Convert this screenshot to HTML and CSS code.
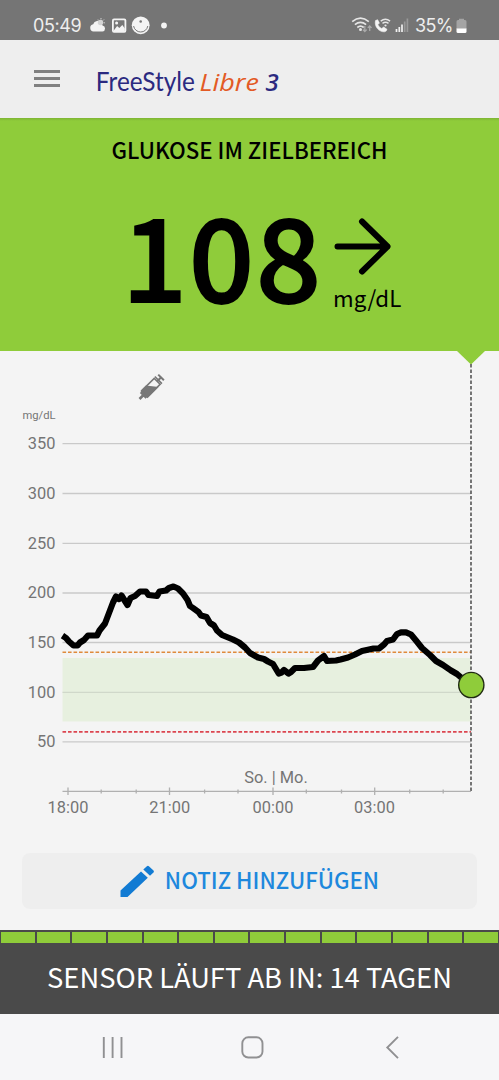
FILE: index.html
```
<!DOCTYPE html>
<html lang="de">
<head>
  <meta charset="UTF-8">
  <meta name="viewport" content="width=device-width, initial-scale=1.0">
  <title>FreeStyle Libre 3</title>
  <link rel="stylesheet" href="styles.css">
</head>
<body>
  <div class="status-bar">
    <span class="clock">05:49</span>
    <svg class="status-left" width="82" height="20" viewBox="88 17 82 20">
      <g fill="#f4f4f4">
        <path d="M93.500 32.500a3.700 3.700 0 0 1-.3-7.300 4.600 4.600 0 0 1 8.300-1.200l1 2.400a3.100 3.100 0 0 1 0 6.100z"/>
        <circle cx="100.500" cy="23.500" r="2.700" fill="#d4d4d4"/>
        <path d="M98 20.500l.8 1M101 19v1.300M104 20.500l-1 1M104.900 23.800h-1.300" stroke="#d4d4d4" stroke-width="1"/>
        <rect x="112" y="19.500" width="14.300" height="14.300" rx="2"/>
        <circle cx="140.700" cy="26.300" r="8.900"/>
        <circle cx="164" cy="26.500" r="2.900"/>
      </g>
      <rect x="113.800" y="21.300" width="10.700" height="10.700" rx=".5" fill="#777"/>
      <path d="M113.800 31.500l3.300-4.500 2.200 2 3-3 2.500 3.500v2.500h-11z" fill="#f4f4f4"/>
      <circle cx="116.600" cy="24" r="1.500" fill="#f4f4f4"/>
      <path d="M133.600 27a7.200 7.200 0 0 0 14.200 0" fill="none" stroke="#777" stroke-width="1"/>
      <circle cx="140.700" cy="22.500" r="1.300" fill="#777"/>
    </svg>
    <svg class="status-right" width="60" height="20" viewBox="350 17 60 20">
      <g fill="none" stroke="#e6e6e6" stroke-width="1.700">
        <path d="M352.200 22.600q8.300-6.800 16.600 0M354.900 25.700q5.600-4.500 11.200 0M357.300 28.500q3.200-2.600 6.400 0"/>
        <path d="M380.700 22.100q4.700-3.700 9.400 0M382.500 24.400q3-2.300 6 0" stroke-width="1.400"/>
      </g>
      <circle cx="360.500" cy="30.500" r="1.500" fill="#e6e6e6"/>
      <path d="M364.800 27v5.500m-1.900-1.900l1.900 1.900 1.900-1.900M369.700 32v-5m-1.900 1.900l1.900-1.900 1.900 1.900" fill="none" stroke="#aaa" stroke-width="1.300"/>
      <path d="M375.500 21.600l2.100-.9 1.800 3.400-1.600 1.700q1.300 2.800 3.900 3.700l2-1.400 3.300 2.200q-.4 2.300-2.600 2.500c-5.500.2-10.300-5.200-8.900-11.200z" fill="#f4f4f4" stroke="#f4f4f4" stroke-width=".6"/>
      <circle cx="385.500" cy="26.500" r="1.100" fill="#e6e6e6"/>
      <path d="M396.500 33v-3M399.300 33v-5M402 33v-7.500" stroke="#f0f0f0" stroke-width="1.700"/>
      <path d="M404.700 33V22.500M407.400 33V19.500" stroke="#999" stroke-width="1.700"/>
    </svg>
    <span class="battery-text">35%</span>
    <svg class="battery" width="11" height="16" viewBox="0 0 11 16">
      <path d="M3 2V.8h5V2h1q1.500 0 1.500 1.500V11H.5V3.500Q.5 2 2 2z" fill="#a4a4a4"/>
      <path d="M.5 10.500h10v3q0 1.500-1.500 1.500H2Q.5 15 .5 13.500z" fill="#fff"/>
    </svg>
  </div>

  <header class="app-bar">
    <div class="menu-icon"><span></span><span></span><span></span></div>
    <svg class="logo" width="190" height="40" viewBox="95 62 190 40">
      <text class="logo-free" x="95.800" y="91" textLength="99" lengthAdjust="spacingAndGlyphs">FreeStyle</text>
      <text class="logo-libre" x="199.500" y="91.200" textLength="59.500" lengthAdjust="spacingAndGlyphs">Libre</text>
      <text class="logo-three" x="265.500" y="91.200">3</text>
    </svg>
  </header>

  <section class="glucose">
    <h1>GLUKOSE IM ZIELBEREICH</h1>
    <div class="reading">
      <div class="value">108</div>
      <div class="trend">
        <svg width="58" height="58" viewBox="0 0 58 58">
          <path d="M4.500 29.500h50M29 4.500l25.500 25-25.500 25" fill="none" stroke="#000" stroke-width="6" stroke-linecap="round" stroke-linejoin="round"/>
        </svg>
        <div class="unit">mg/dL</div>
      </div>
    </div>
  </section>

  <svg class="chart" width="499" height="480" viewBox="0 351 499 480">
    <path d="M457 351h28l-14 13.500z" fill="#8fcc3a"/>

    <!-- insulin marker -->
    <g transform="translate(139.500 399) rotate(-45)" fill="#777">
      <path d="M0-1.300h5v2.600H0zM4.500-4H7v-1h7l8 10H7V4H4.500z"/>
      <path d="M7-4.200h18v8.400H7z" fill="none" stroke="#777" stroke-width="1.600"/>
      <path d="M25-1h5v2h-5zM26-5h1.500V5H26zM29.500-4h2v8h-2z"/>
    </g>

    <rect x="62.500" y="658" width="408.500" height="63.500" fill="#e7f0df"/>
    <path class="grid" d="M62.500 443.700H471M62.500 493.500H471M62.500 543.300H471M62.500 593H471M62.500 642.500H471M62.500 741.800H471"/>
    <path class="grid grid-in" d="M62.500 692.300H471"/>
    <path d="M62.500 652.300H471" stroke="#df8a3c" stroke-width="1.600" stroke-dasharray="3.600 1.900"/>
    <path d="M62.500 731.900H471" stroke="#dc4650" stroke-width="1.700" stroke-dasharray="3.600 1.900"/>
    <path d="M471 364V792" stroke="#555" stroke-width="1.600" stroke-dasharray="3.600 1.900"/>

    <path class="axis" d="M62.500 791.400H471"/>
    <path class="axis" d="M68 787.500v7.500M169.500 787.500v7.500M273 787.500v7.500M374.700 787.500v7.500"/>
    <path class="axis" d="M101.200 789.500v4M136.200 789.500v4M204.600 789.500v4M238 789.500v4M306.300 789.500v4M341.500 789.500v4M409.700 789.500v4M443.200 789.500v4"/>

    <g class="y-labels">
      <text class="small" x="55.500" y="419">mg/dL</text>
      <text x="55.500" y="449">350</text>
      <text x="55.500" y="498.800">300</text>
      <text x="55.500" y="548.500">250</text>
      <text x="55.500" y="598.200">200</text>
      <text x="55.500" y="647.800">150</text>
      <text x="55.500" y="697.500">100</text>
      <text x="55.500" y="747">50</text>
    </g>
    <g class="x-labels">
      <text x="276" y="783">So. | Mo.</text>
      <text x="68" y="812.500">18:00</text>
      <text x="169.700" y="812.500">21:00</text>
      <text x="273" y="812.500">00:00</text>
      <text x="374.500" y="812.500">03:00</text>
    </g>

    <path class="curve" d="M62.500 635.700L66 638L69 641.500L73.500 645.500H77.500L80 642.500L84 640L88 635.500H97L99.500 630.500L105 623.500L109 613L113 602.500L116 596.500L119 599L121.500 595.500L124 599.500L127.500 605L130.500 598L135 596L140 591.500H146L148.500 595L157 596L159.500 591.500L166 590.500L169 588L173.500 586.500L178 588.500L183 593.500L187.500 600L190 606L193 608L198.500 612L201 615.500L206.500 617L210 623L214 625.500L217 630.500L222 635L233 639.500L239 642.500L245 647.500L250 653L258 657.500L264 659L268 661.500L273 664L278.700 673.500L281.500 672.500L284 670L288.500 673.500L291 672L295 668H304L313 667L318 660.500L324 656L327 661L336 660.500L340.500 659.500L348 657.500L355 654.500L362 651L369 649.500L373.500 648.500H379L384 644.500L387 641L393 639.500L397 634L401 632.300H406L411 634.500L416 640.500L422 648L430 655L436 661L443 665L451 670.500L457 674L464 680L471 685"/>
    <circle cx="471.300" cy="685" r="12.600" fill="#8fcc3a" stroke="#1f2a12" stroke-width="1.400"/>
  </svg>

  <button class="note-button" type="button">
    <svg width="34" height="33" viewBox="0 0 34 33">
      <path d="M.5 25.500L21 6.500l6.800 6.200L7.500 32h-7zM23.300 4.400l3.600-3.200q1-.8 2 0l4.600 4.400q.8.900 0 1.800L30 10.700z" fill="#127bd3"/>
    </svg>
    <span>NOTIZ HINZUFÜGEN</span>
  </button>

  <footer class="sensor">
    <div class="days">
      <i></i><i></i><i></i><i></i><i></i><i></i><i></i><i></i><i></i><i></i><i></i><i></i><i></i><i></i>
    </div>
    <p>SENSOR LÄUFT AB IN: 14 TAGEN</p>
  </footer>

  <nav class="nav-bar">
    <svg width="499" height="66" viewBox="0 1014 499 66">
      <g fill="none" stroke="#909092" stroke-width="1.900">
        <path d="M103.800 1037v21M112.600 1037v21M121.500 1037v21"/>
        <rect x="242.300" y="1037.300" width="20.200" height="20.200" rx="6"/>
        <path d="M398 1036.800l-10.700 10.700 10.700 10.700"/>
      </g>
    </svg>
  </nav>
</body>
</html>
```
FILE: styles.css
```
* {
  box-sizing: border-box;
}

body {
  margin: 0;
  width: 499px;
  height: 1080px;
  overflow: hidden;
  display: flex;
  flex-direction: column;
  background-color: #f4f4f4;
  font-family: "Noto Sans CJK SC", "Noto Sans", sans-serif;
}

svg {
  display: block;
  flex-shrink: 0;
}

.status-bar {
  height: 40px;
  flex-shrink: 0;
  display: flex;
  align-items: center;
  padding: 12px 0 0 33px;
  background-color: #757575;
  color: #eee;
  font-family: Inter, Roboto, sans-serif;
  font-size: 18px;
  letter-spacing: -0.4px;
  line-height: 26px;
}

.clock {
  width: 55px;
}

.status-right {
  margin-left: 180px;
}

.battery-text {
  width: 41px;
  margin-left: 5px;
  letter-spacing: -0.6px;
}

.app-bar {
  height: 78px;
  flex-shrink: 0;
  display: flex;
  align-items: center;
  padding: 5px 0 0 34px;
  background-color: #eee;
}

.menu-icon {
  width: 61px;
  display: flex;
  flex-direction: column;
  gap: 4px;
  margin-bottom: 6px;
}

.menu-icon span {
  width: 26px;
  height: 3px;
  background-color: #808080;
}

.logo {
  font-family: Lato, "Open Sans", sans-serif;
}

.logo-free {
  font-size: 27.5px;
  fill: #2b2a80;
}

.logo-libre {
  font-family: "Open Sans", sans-serif;
  font-size: 24.5px;
  font-style: italic;
  font-weight: 500;
  fill: #e35a25;
}

.logo-three {
  font-family: "Open Sans", sans-serif;
  font-size: 24px;
  font-style: italic;
  font-weight: 600;
  fill: #2b2a80;
}

.glucose {
  height: 233px;
  flex-shrink: 0;
  background: linear-gradient(#7fb535, #8fcc3a 3px);
  color: #000;
}

.glucose h1 {
  margin: 0;
  padding-top: 15px;
  font-size: 22.2px;
  font-weight: 500;
  line-height: 32px;
  text-align: center;
}

.reading {
  display: flex;
  padding-left: 122px;
}

.value {
  width: 211px;
  padding-top: 28px;
  font-size: 114px;
  font-weight: 500;
  letter-spacing: 2px;
  line-height: 120px;
  -webkit-text-stroke: 1.8px #000;
}

.trend {
  padding-top: 52px;
}

.unit {
  margin-top: 6px;
  font-size: 22.3px;
  line-height: 32px;
}

.grid {
  stroke: #c9c9c9;
  stroke-width: 1.3;
}

.grid-in {
  stroke: #d0d8ca;
}

.axis {
  fill: none;
  stroke: #b0b0b0;
  stroke-width: 1.3;
}

.y-labels,
.x-labels {
  font-family: Roboto, sans-serif;
  font-size: 16.4px;
  fill: #757575;
}

.y-labels {
  text-anchor: end;
}

.x-labels {
  text-anchor: middle;
}

.y-labels .small {
  font-size: 11.2px;
}

.curve {
  fill: none;
  stroke: #000;
  stroke-width: 6.2;
  stroke-linejoin: round;
}

.note-button {
  width: 455px;
  height: 56px;
  flex-shrink: 0;
  margin: 22px 0 0 22px;
  padding: 0;
  display: flex;
  align-items: center;
  justify-content: center;
  gap: 11px;
  border: none;
  border-radius: 8px;
  background-color: #eee;
  color: #1e88dd;
  font-family: inherit;
  font-size: 22.2px;
  font-weight: 500;
  line-height: 32px;
}

.note-button span {
  padding-bottom: 5px;
}

.sensor {
  height: 84px;
  flex-shrink: 0;
  margin-top: 21px;
  background-color: #4a4a4a;
  color: #fff;
}

.days {
  display: flex;
  gap: 2px;
  padding: 2px 1px 0;
}

.days i {
  flex: 1;
  height: 11px;
  background-color: #8fcc3a;
}

.sensor p {
  margin: 0;
  padding-top: 13px;
  font-size: 27.3px;
  line-height: 40px;
  text-align: center;
}

.nav-bar {
  height: 66px;
  flex-shrink: 0;
  background-color: #f6f6f8;
}
```
